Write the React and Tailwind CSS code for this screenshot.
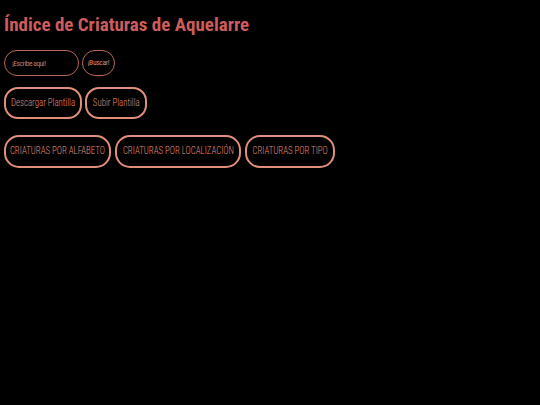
const botones = [
  { label: 'CRIATURAS POR ALFABETO', w: 'w-[107px]' },
  { label: 'CRIATURAS POR LOCALIZACIÓN', w: 'w-[126px]' },
  { label: 'CRIATURAS POR TIPO', w: 'w-[90px]' },
];

function Texto({ children }) {
  return <span className="inline-block origin-center scale-x-[0.8] whitespace-nowrap">{children}</span>;
}

export default function App() {
  return (
    <div className="min-h-[405px] bg-black px-1 font-['Roboto_Condensed','Liberation_Sans_Narrow',sans-serif]">
      <h1 className="pt-[14px] text-[19px] leading-[22px] font-bold text-[#cd5c5c]">
        Índice de Criaturas de Aquelarre
      </h1>

      <div className="mt-[14px] flex gap-[3px]">
        <input
          type="text"
          placeholder="¡Escribe aquí!"
          className="h-[26px] w-[75px] rounded-[13px] border-[1.5px] border-[#b9675a] bg-black pl-[7px] text-[7.5px] tracking-[-0.45px] text-[#cd5c5c] outline-none placeholder:text-[#c47a6c]"
        />
        <button className="h-[26px] w-[33px] rounded-[13px] border-[1.5px] border-[#b9675a] bg-black text-[7.5px] tracking-[-0.3px] text-[#d98a76]">
          ¡Buscar!
        </button>
      </div>

      <div className="mt-[11px] flex gap-[3px]">
        <button className="flex h-[32px] w-[78px] items-center justify-center rounded-[14px] border-2 border-[#e0907a] bg-black text-[11px] font-light text-[#e0907a]">
          <Texto>Descargar Plantilla</Texto>
        </button>
        <button className="flex h-[32px] w-[62px] items-center justify-center rounded-[14px] border-2 border-[#e0907a] bg-black text-[11px] font-light text-[#e0907a]">
          <Texto>Subir Plantilla</Texto>
        </button>
      </div>

      <div className="mt-[16px] flex gap-[4px]">
        {botones.map((b) => (
          <button
            key={b.label}
            className={`flex h-[33px] ${b.w} items-center justify-center rounded-[15px] border-2 border-[#e0907a] bg-black text-[11px] font-light text-[#e0907a]`}
          >
            <Texto>{b.label}</Texto>
          </button>
        ))}
      </div>
    </div>
  );
}
